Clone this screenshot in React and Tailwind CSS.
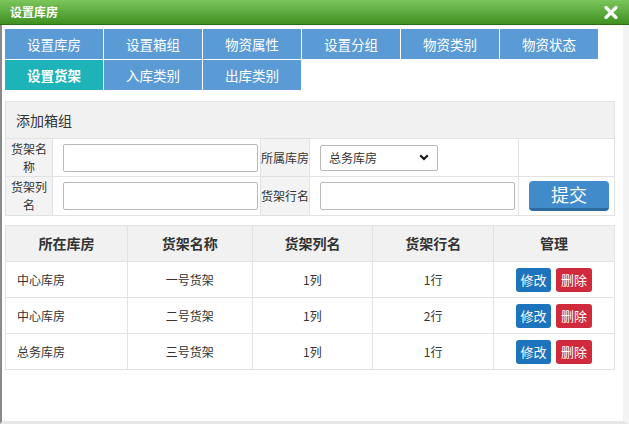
import React from "react";

const font = { fontFamily: '"Noto Sans CJK SC", "Noto Sans", sans-serif' };

const tabsRow1 = ["设置库房", "设置箱组", "物资属性", "设置分组", "物资类别", "物资状态"];
const tabsRow2 = ["设置货架", "入库类别", "出库类别"];

const rows = [
  ["中心库房", "一号货架", "1列", "1行"],
  ["中心库房", "二号货架", "1列", "2行"],
  ["总务库房", "三号货架", "1列", "1行"],
];

function Tab({ label, active }) {
  return (
    <div
      className={`w-[98px] h-[30px] flex items-center justify-center text-white text-[13.5px] ${
        active ? "bg-[#1eb3b9] font-bold" : "bg-[#5b9bd5]"
      }`}
    >
      {label}
    </div>
  );
}

export default function App() {
  return (
    <div className="w-[629px] h-[424px] bg-white flex flex-col overflow-hidden" style={font}>
      <div className="h-[25px] shrink-0 flex items-center justify-between pl-[10px] pr-[11px] bg-gradient-to-b from-[#7cc65b] to-[#3f901f] border-b border-[#2f6c15]">
        <span className="text-white text-[12px] font-bold">设置库房</span>
        <svg width="14" height="13" viewBox="0 0 14 13">
          <path d="M2 1.5 L12 11.5 M12 1.5 L2 11.5" stroke="#fff" strokeWidth="3.2" strokeLinecap="round" />
        </svg>
      </div>
      <div className="flex-1 flex border-l-2 border-[#8a8a8a] border-r-[6px] border-r-[#f3f3f3] border-b-[3px] border-b-[#e6e6e6]">
        <div className="flex-1 flex flex-col pl-[3px] pt-[4px]">
          <div className="flex flex-col gap-px">
            <div className="flex gap-px">
              {tabsRow1.map((t) => (
                <Tab key={t} label={t} />
              ))}
            </div>
            <div className="flex gap-px">
              {tabsRow2.map((t, i) => (
                <Tab key={t} label={t} active={i === 0} />
              ))}
            </div>
          </div>

          <table className="mt-[11px] w-[610px] border-collapse text-[12px] text-[#333]">
            <tbody>
              <tr className="h-[37px] bg-[#f1f1f1]">
                <td colSpan={5} className="border border-[#e2e2e2] pl-[10px] text-[14px] text-[#333]">
                  添加箱组
                </td>
              </tr>
              <tr className="h-[38px]">
                <td className="w-[47px] bg-[#f3f3f3] border border-[#e2e2e2] text-center leading-[18px] px-[2px]">
                  货架名称
                </td>
                <td className="w-[208px] border border-[#e2e2e2] pl-[10px]">
                  <div className="w-[195px] h-[28px] border border-[#b8b8b8] rounded-[2px] bg-white" />
                </td>
                <td className="w-[49px] bg-[#f3f3f3] border border-[#e2e2e2] whitespace-nowrap">所属库房</td>
                <td className="w-[209px] border border-[#e2e2e2] pl-[10px]">
                  <div className="w-[118px] h-[26px] border border-[#b8b8b8] rounded-[2px] bg-white flex items-center justify-between pl-[8px] pr-[8px]">
                    <span className="text-[12px] text-[#333]">总务库房</span>
                    <svg width="10" height="7" viewBox="0 0 10 7">
                      <path d="M1.2 1.2 L5 5 L8.8 1.2" stroke="#111" strokeWidth="2" fill="none" />
                    </svg>
                  </div>
                </td>
                <td className="border border-[#e2e2e2]" />
              </tr>
              <tr className="h-[39px]">
                <td className="bg-[#f3f3f3] border border-[#e2e2e2] text-center leading-[18px] px-[2px]">
                  货架列名
                </td>
                <td className="border border-[#e2e2e2] pl-[10px]">
                  <div className="w-[195px] h-[28px] border border-[#b8b8b8] rounded-[2px] bg-white" />
                </td>
                <td className="bg-[#f3f3f3] border border-[#e2e2e2] whitespace-nowrap">货架行名</td>
                <td className="border border-[#e2e2e2] pl-[10px]">
                  <div className="w-[195px] h-[28px] border border-[#b8b8b8] rounded-[2px] bg-white" />
                </td>
                <td className="border border-[#e2e2e2] pl-[10px]">
                  <div className="w-[80px] h-[30px] rounded-[4px] bg-[#428bca] border-b-[3px] border-[#2c6aa0] flex items-center justify-center text-white text-[18px]">
                    提交
                  </div>
                </td>
              </tr>
            </tbody>
          </table>

          <table className="mt-[9px] w-[610px] border-collapse text-[12px] text-[#333]">
            <thead>
              <tr className="h-[36px] bg-[#f1f1f1]">
                {["所在库房", "货架名称", "货架列名", "货架行名", "管理"].map((h, i) => (
                  <th
                    key={h}
                    className={`border border-[#e2e2e2] text-center text-[14px] font-semibold text-[#333] ${
                      i === 1 ? "w-[125px]" : i === 0 ? "w-[122px]" : "w-[121px]"
                    }`}
                  >
                    {h}
                  </th>
                ))}
              </tr>
            </thead>
            <tbody>
              {rows.map((r, idx) => (
                <tr key={idx} className="h-[36px]">
                  <td className="border border-[#e2e2e2] pl-[11px]">{r[0]}</td>
                  <td className="border border-[#e2e2e2] text-center">{r[1]}</td>
                  <td className="border border-[#e2e2e2] text-center">{r[2]}</td>
                  <td className="border border-[#e2e2e2] text-center">{r[3]}</td>
                  <td className="border border-[#e2e2e2]">
                    <div className="flex justify-center gap-[5px]">
                      <span className="w-[35px] h-[24px] rounded-[3px] bg-[#1c74bc] text-white text-[13px] flex items-center justify-center">
                        修改
                      </span>
                      <span className="w-[36px] h-[24px] rounded-[3px] bg-[#d12a3c] text-white text-[13px] flex items-center justify-center">
                        删除
                      </span>
                    </div>
                  </td>
                </tr>
              ))}
            </tbody>
          </table>
        </div>
      </div>
    </div>
  );
}
